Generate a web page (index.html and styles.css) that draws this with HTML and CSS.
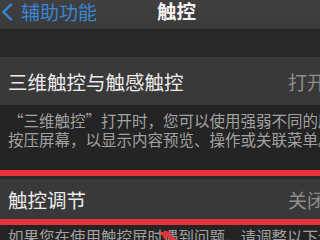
FILE: index.html
```html
<!DOCTYPE html>
<html lang="zh">
<head>
<meta charset="utf-8">
<link rel="stylesheet" href="styles.css">
</head>
<body>
<div class="screen">
  <header class="nav">
    <div class="back">
      <svg class="chev" width="12" height="18" viewBox="0 0 12 18"><path d="M10 1.5 L2.5 9 L10 16.5" fill="none" stroke="#3a86d8" stroke-width="2.4" stroke-linecap="round" stroke-linejoin="round"/></svg>
      <span class="back-label">辅助功能</span>
    </div>
    <div class="title">触控</div>
  </header>
  <div class="gap"></div>
  <div class="row">
    <span class="label">三维触控与触感触控</span>
    <span class="value">打开</span>
  </div>
  <div class="note">
    <div class="line">“三维触控”打开时，您可以使用强弱不同的压力</div>
    <div class="line">按压屏幕，以显示内容预览、操作或关联菜单。</div>
  </div>
  <div class="mark">
    <div class="row row2">
      <span class="label">触控调节</span>
      <span class="value">关闭</span>
    </div>
  </div>
  <div class="note note2">
    <div class="line">如果您在使用触控屏时遇到问题，请调整以下设置</div>
  </div>
  <svg class="arrow" width="24" height="16" viewBox="0 0 24 16"><path d="M2 4 L14 3 L11 6 L22 14 L19 16 L9 9 L7 12 Z" fill="#e8333d"/></svg>
</div>
</body>
</html>
```
FILE: styles.css
```css
html, body {
  margin: 0;
  padding: 0;
  background: #242424;
  overflow: hidden;
}
.screen {
  position: relative;
  width: 320px;
  height: 240px;
  overflow: hidden;
  font-family: "Noto Sans CJK SC", "Noto Sans", sans-serif;
  background: #242424;
}
.nav {
  height: 29px;
  background: linear-gradient(#404040, #3a3a3a);
  display: flex;
  align-items: flex-start;
  position: relative;
}
.back {
  display: flex;
  align-items: center;
  padding: 2px 0 0 1px;
  gap: 8px;
}
.back-label {
  color: #3a86d8;
  font-size: 19px;
  line-height: 19px;
}
.title {
  position: absolute;
  left: 157px;
  top: 0;
  color: #f2f2f2;
  font-size: 19.5px;
  font-weight: 700;
  line-height: 21px;
}
.gap {
  height: 28px;
  background: #272727;
}
.row {
  display: grid;
  grid-template-columns: 280px auto;
  align-items: center;
  height: 48px;
  padding-left: 8px;
  background: #393939;
  white-space: nowrap;
}
.label {
  color: #ececec;
  font-size: 19.5px;
}
.value {
  color: #8e8e8e;
  font-size: 19px;
}
.note {
  padding: 6px 0 0 8px;
  color: #a2a2a2;
  font-size: 15.5px;
  line-height: 19px;
  white-space: nowrap;
  height: 65px;
  box-sizing: border-box;
}
.mark {
  border-top: 6px solid #e8333d;
  border-bottom: 6px solid #e8333d;
  padding: 3px 0 0;
  background: #2a2a2a;
}
.row2 {
  height: 40px;
}
.note2 {
  padding-top: 2px;
}
.arrow {
  position: absolute;
  left: 158px;
  top: 228px;
}
```
